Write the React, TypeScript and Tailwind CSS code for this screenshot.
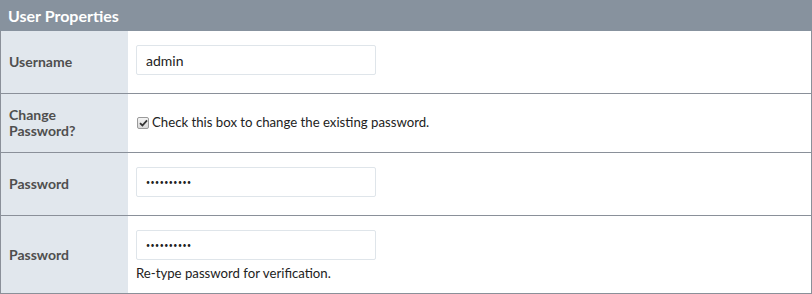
const rowBase = 'flex border-b border-[#8a9099]';

const Label = ({ children }: { children: React.ReactNode }) => (
  <div className="w-[127px] shrink-0 bg-[#e1e7ed] pl-[8px] pr-2 flex items-center text-[14px] font-bold leading-[16px] text-[#4f4f4f]">
    {children}
  </div>
);

const Field = ({ value, secret = false }: { value: string; secret?: boolean }) => (
  <input
    type={secret ? 'password' : 'text'}
    defaultValue={value}
    readOnly
    className={`w-[240px] h-[30px] border border-[#dfe5ea] rounded-[2px] bg-white px-[9px] text-[#222] outline-none ${
      secret ? 'text-[7px] tracking-[0.5px]' : 'text-[14px]'
    }`}
  />
);

const CheckMark = () => (
  <span className="w-[12px] h-[12px] rounded-[2px] border border-[#9a9a9a] bg-gradient-to-b from-[#f4f4f4] to-[#d8d8d8] flex items-center justify-center">
    <svg width="9" height="8" viewBox="0 0 9 8">
      <path d="M1 4.2 L3.4 6.5 L8 1.3" fill="none" stroke="#333" strokeWidth="1.8" />
    </svg>
  </span>
);

export default function App() {
  return (
    <div className="w-[812px] h-[294px] bg-white font-['Lato',sans-serif]">
      <div className="h-[31px] bg-[#87929e] pl-[8px] flex items-center text-[16px] font-bold text-white">
        User Properties
      </div>
      <div className="border-l border-r border-[#8a9099]">
        <div className={`${rowBase} h-[63px]`}>
          <Label>Username</Label>
          <div className="flex-1 pl-[8px] pt-[14px]">
            <Field value="admin" />
          </div>
        </div>
        <div className={`${rowBase} h-[59px]`}>
          <Label>
            Change
            <br />
            Password?
          </Label>
          <div className="flex-1 pl-[9px] flex items-center gap-[3px] text-[13.2px] text-[#222]">
            <CheckMark />
            <span>Check this box to change the existing password.</span>
          </div>
        </div>
        <div className={`${rowBase} h-[63px]`}>
          <Label>Password</Label>
          <div className="flex-1 pl-[8px] pt-[14px]">
            <Field value="••••••••••" secret />
          </div>
        </div>
        <div className={`${rowBase} h-[78px]`}>
          <Label>Password</Label>
          <div className="flex-1 pl-[8px] pt-[14px]">
            <Field value="••••••••••" secret />
            <div className="mt-[3px] text-[13.2px] text-[#222] leading-[20px]">Re-type password for verification.</div>
          </div>
        </div>
      </div>
    </div>
  );
}
